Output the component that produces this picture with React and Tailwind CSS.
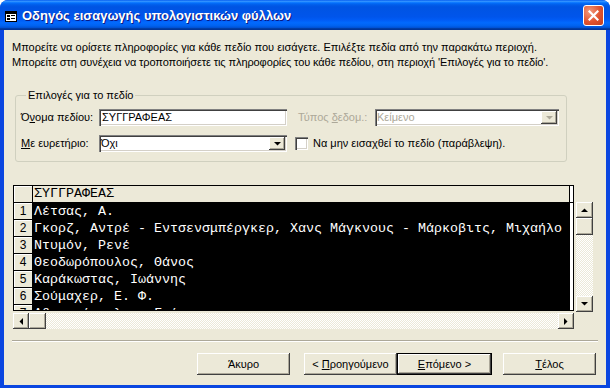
const UI = "font-['Liberation_Sans','Noto_Sans',sans-serif]";
const MONO = "font-['Liberation_Mono','DejaVu_Sans_Mono',monospace]";

const raised =
  "bg-[#ece9d8] shadow-[inset_-1px_-1px_0_#404040,inset_1px_1px_0_#fff,inset_-2px_-2px_0_#aca899]";
const sunken =
  "bg-white shadow-[inset_1px_1px_0_#808080,inset_2px_2px_0_#404040,inset_-1px_-1px_0_#fff,inset_-2px_-2px_0_#d4d0c8]";
const track =
  "bg-[repeating-conic-gradient(#ffffff_0_25%,#ece9d8_0_50%)] bg-[length:2px_2px]";

const rows = [
  "Λέτσας, Α.",
  "Γκορζ, Αντρέ - Εντσενσμπέργκερ, Χανς Μάγκνους - Μάρκοβιτς, Μιχαήλο",
  "Ντυμόν, Ρενέ",
  "Θεοδωρόπουλος, Θάνος",
  "Καράκωστας, Ιωάννης",
  "Σούμαχερ, Ε. Φ.",
  "Αθανασόπουλος, Γιάννης",
];

const Arrow = ({ dir, color = "#000" }) => {
  const pts = {
    up: "0,4 7,4 3.5,0.5",
    down: "0,0 7,0 3.5,3.5",
    left: "4,0 4,7 0.5,3.5",
    right: "0,0 0,7 3.5,3.5",
  };
  const vert = dir === "up" || dir === "down";
  return (
    <svg width={vert ? 7 : 4} height={vert ? 4 : 7} viewBox={vert ? "0 0 7 4" : "0 0 4 7"}>
      <polygon points={pts[dir]} fill={color} />
    </svg>
  );
};

const ScrollBtn = ({ dir, className = "", color }) => (
  <div className={`flex shrink-0 items-center justify-center ${raised} ${className}`}>
    <Arrow dir={dir} color={color} />
  </div>
);

const Btn = ({ children, isDefault }) => (
  <div
    className={`flex h-[22px] items-center justify-center ${raised} ${
      isDefault ? "w-[95px] border border-black" : "w-[93px]"
    }`}
  >
    {children}
  </div>
);

const Combo = ({ value, width, disabled }) => (
  <div className={`flex h-[17px] items-center ${sunken} ${width} ${disabled ? "bg-[#ece9d8]" : ""}`}>
    <span className={`flex-1 pl-[2px] leading-none ${disabled ? "text-[#aca899]" : ""}`}>{value}</span>
    <ScrollBtn dir="down" className="mr-[2px] h-[13px] w-[16px]" color={disabled ? "#aca899" : "#000"} />
  </div>
);

export default function App() {
  return (
    <div className={`flex h-[388px] w-[610px] flex-col rounded-t-[8px] bg-[#0a46e0] text-[11px] text-black ${UI}`}>
      {/* title bar */}
      <div className="flex h-[30px] shrink-0 items-center rounded-t-[8px] bg-[linear-gradient(180deg,#0058ee_0%,#3593ff_4%,#288eff_6%,#127dff_8%,#036ffc_10%,#0262ee_14%,#0057e5_20%,#0054e3_24%,#0055eb_56%,#005bf5_66%,#026afe_76%,#0062ef_86%,#0052d6_92%,#0040ab_94%,#003092_100%)] pl-[5px] pr-[6px]">
        <svg width="12" height="11" viewBox="0 0 12 11" className="mt-[2px]">
          <rect x="0.5" y="0.5" width="11" height="10" fill="#fff" stroke="#000" />
          <rect x="1" y="1" width="10" height="2" fill="#000" />
          <rect x="2" y="4" width="3" height="2" fill="#000" />
          <rect x="6" y="4" width="4" height="1" fill="#000" />
          <rect x="2" y="7" width="3" height="2" fill="#000" />
          <rect x="6" y="7" width="4" height="1" fill="#000" />
        </svg>
        <span className="ml-[5px] mt-[1px] text-[13px] font-bold text-white [text-shadow:1px_1px_0_#0a1883]">
          Οδηγός εισαγωγής υπολογιστικών φύλλων
        </span>
        <div className="ml-auto mt-[1px] flex h-[21px] w-[21px] items-center justify-center rounded-[3px] border border-white bg-[radial-gradient(circle_at_30%_30%,#f19a7d,#e0532f_55%,#c2401f)]">
          <svg width="11" height="11" viewBox="0 0 11 11">
            <path d="M1.5 1.5 L9.5 9.5 M9.5 1.5 L1.5 9.5" stroke="#fff" strokeWidth="2.2" strokeLinecap="square" />
          </svg>
        </div>
      </div>

      {/* body */}
      <div className="mx-[4px] mb-[3px] flex flex-1 flex-col bg-[#ece9d8] pl-[8px] pt-[10px]">
        <div className="leading-[15px]">
          <p>Μπορείτε να ορίσετε πληροφορίες για κάθε πεδίο που εισάγετε. Επιλέξτε πεδία από την παρακάτω περιοχή.</p>
          <p className="tracking-[-0.1px]">
            Μπορείτε στη συνέχεια να τροποποιήσετε τις πληροφορίες του κάθε πεδίου, στη περιοχή 'Επιλογές για το πεδίο'.
          </p>
        </div>

        <fieldset className="ml-[3px] mt-[18px] h-[74px] w-[552px] rounded-[3px] border border-[#d0d0bf] pl-[5px] pt-[7px]">
          <legend className="ml-[5px] px-[2px] leading-[14px]">Επιλογές για το πεδίο</legend>
          <div className="flex items-center">
            <span className="w-[78px]">
              Ό<u>ν</u>ομα πεδίου:
            </span>
            <div className={`flex h-[17px] w-[188px] items-center pl-[3px] ${sunken}`}>ΣΥΓΓΡΑΦΕΑΣ</div>
            <span className="ml-[11px] w-[77px] text-[#aca899]">
              Τύπος <u>δ</u>εδομ.:
            </span>
            <Combo value="Κείμενο" width="w-[184px]" disabled />
          </div>
          <div className="mt-[9px] flex items-center">
            <span className="w-[78px]">
              <u>Μ</u>ε ευρετήριο:
            </span>
            <Combo value="Όχι" width="w-[188px]" />
            <div className={`ml-[8px] h-[13px] w-[13px] ${sunken}`} />
            <span className="ml-[5px]">
              Να μην εισα<u>χ</u>θεί το πεδίο (παράβλεψη).
            </span>
          </div>
        </fieldset>

        {/* datasheet */}
        <div className="ml-[1px] mt-[23px] flex">
          <div className="flex w-[561px] flex-col">
            <div className={`flex h-[126px] flex-col overflow-hidden border border-black ${MONO} text-[13.33px]`}>
              <div className="flex h-[17px] shrink-0 border-b border-black bg-[#ece9d8]">
                <div className="w-[19px] shrink-0 border-r border-black shadow-[inset_1px_1px_0_#fff]" />
                <div className="flex flex-1 items-center pl-[1px] leading-none">ΣΥΓΓΡΑΦΕΑΣ</div>
                <div className="w-[4px] shrink-0 border-l border-black bg-white" />
              </div>
              {rows.map((r, i) => (
                <div key={i} className="flex h-[17px] shrink-0">
                  <div
                    className={`flex w-[19px] shrink-0 items-center justify-center border-b border-r border-black bg-[#ece9d8] shadow-[inset_1px_1px_0_#fff] text-[12px] ${UI}`}
                  >
                    {i + 1}
                  </div>
                  <div className="flex flex-1 items-center overflow-hidden whitespace-nowrap bg-black pl-[1px] leading-none text-white">
                    {r}
                  </div>
                  <div className="w-[4px] shrink-0 border-l border-black bg-white" />
                </div>
              ))}
            </div>
            <div className="mt-[2px] flex h-[16px]">
              <ScrollBtn dir="left" className="w-[16px]" />
              <div className={`w-[17px] shrink-0 ${raised}`} />
              <div className={`flex-1 ${track}`} />
              <ScrollBtn dir="right" className="w-[16px]" />
            </div>
          </div>
          <div className="ml-[2px] mt-[17px] flex h-[110px] w-[17px] flex-col">
            <ScrollBtn dir="up" className="h-[16px]" />
            <div className={`h-[17px] shrink-0 ${raised}`} />
            <div className={`flex-1 ${track}`} />
            <ScrollBtn dir="down" className="h-[16px]" />
          </div>
        </div>

        <div className="mt-[11px] h-[2px] w-[586px] border-t border-b border-t-[#aca899] border-b-white" />

        <div className="mt-[11px] flex pr-[10px] justify-end">
          <Btn>Άκυρο</Btn>
          <div className="ml-[14px]">
            <Btn>
              &lt; <u className="ml-[3px]">Π</u>ροηγούμενο
            </Btn>
          </div>
          <Btn isDefault>
            <u>Ε</u>πόμενο &gt;
          </Btn>
          <div className="ml-[11px]">
            <Btn>
              <u>Τ</u>έλος
            </Btn>
          </div>
        </div>
      </div>
    </div>
  );
}
